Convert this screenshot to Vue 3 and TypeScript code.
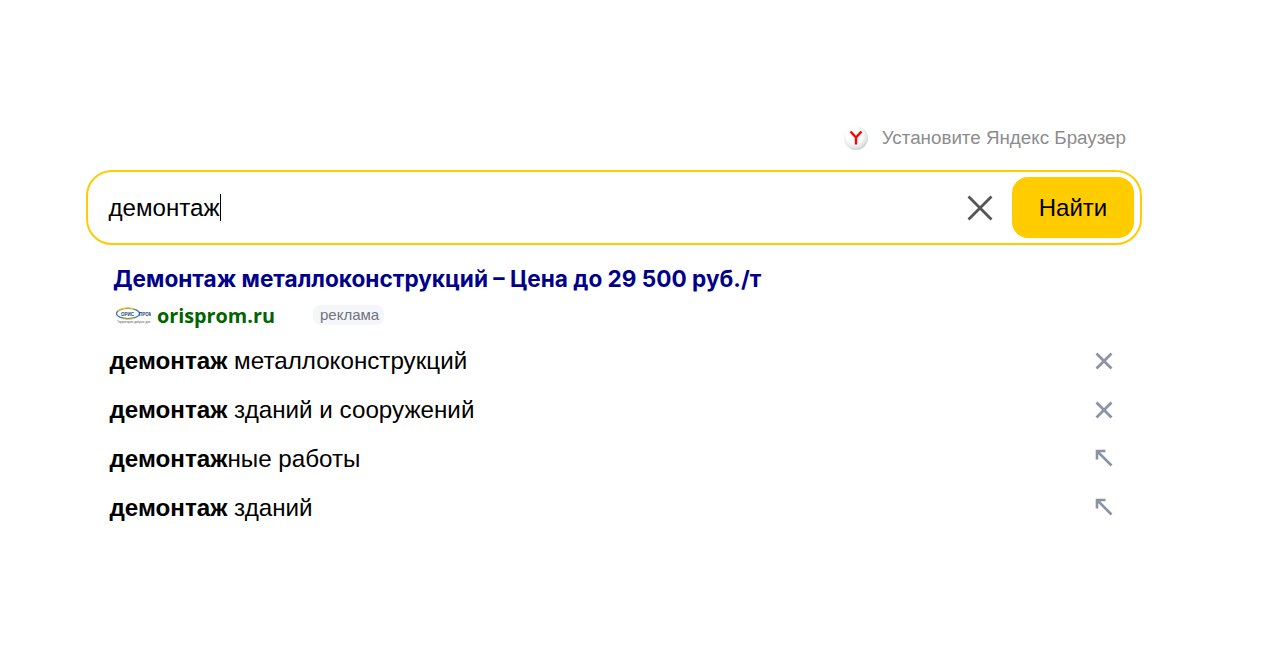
<script setup lang="ts">
interface Row { bold: string; rest: string; icon: 'x' | 'arrow' }
const rows: Row[] = [
  { bold: 'демонтаж', rest: ' металлоконструкций', icon: 'x' },
  { bold: 'демонтаж', rest: ' зданий и сооружений', icon: 'x' },
  { bold: 'демонтаж', rest: 'ные работы', icon: 'arrow' },
  { bold: 'демонтаж', rest: ' зданий', icon: 'arrow' },
]
</script>

<template>
  <div class="page">
    <div class="promo">
      <span class="ball">
        <svg width="14" height="15" viewBox="0 0 14 15"><path d="M1.500 1.500 7 7.500M12.500 1.500 7 7.500V14.500" fill="none" stroke="#f00" stroke-width="2.400" /></svg>
      </span>
      <span class="promo-text">Установите Яндекс Браузер</span>
    </div>
    <div class="search">
      <span class="query">демонтаж</span><span class="caret"></span>
      <svg class="clear" width="26" height="26" viewBox="0 0 26 26"><path d="M1.500 1.500 24.500 24.500M24.500 1.500 1.500 24.500" stroke="#555" stroke-width="2.800" fill="none" /></svg>
      <button class="find">Найти</button>
    </div>
    <div class="ad">
      <div class="ad-title">Демонтаж металлоконструкций – Цена до 29 500 руб./т</div>
      <div class="ad-meta">
        <span class="logo">
          <svg width="36" height="17" viewBox="0 0 36 17">
            <ellipse cx="13" cy="6.500" rx="11.500" ry="5.200" fill="none" stroke="#3a7fc4" stroke-width="1.300" />
            <path d="M2.500 4C7 .8 14 .4 19 1.800" fill="none" stroke="#f0c419" stroke-width="1.200" />
            <path d="M7 11.500c4 1 9 1 13-.5" fill="none" stroke="#f0c419" stroke-width="1" />
            <text x="6" y="8.500" class="logo-text">ОРИС</text>
            <text x="24" y="8.500" class="logo-text">ПРОМ</text>
            <text x="2" y="15.500" class="logo-sub">Территория добрых дел</text>
          </svg>
        </span>
        <span class="domain">orisprom.ru</span>
        <span class="tag">реклама</span>
      </div>
    </div>
    <ul class="list">
      <li v-for="row in rows" :key="row.bold + row.rest" class="row">
        <span class="row-text"><b>{{ row.bold }}</b>{{ row.rest }}</span>
        <svg v-if="row.icon === 'x'" width="18" height="18" viewBox="0 0 18 18" class="ico"><path d="M1.500 1.500 16.500 16.500M16.500 1.500 1.500 16.500" stroke="#8a93a3" stroke-width="2.800" fill="none" /></svg>
        <svg v-else width="18" height="18" viewBox="0 0 18 18" class="ico up"><path d="M16.500 16.500 2.500 2.500M2 10.500V2h8.500" stroke="#8a93a3" stroke-width="2.600" fill="none" /></svg>
      </li>
    </ul>
  </div>
</template>

<style>
html, body { background: #fff; margin: 0; }
</style>

<style scoped>
.page {
  width: 1056px;
  height: 648px;
  box-sizing: border-box;
  margin-left: 86px;
  padding-top: 125px;
  font-family: "Liberation Sans", Arial, sans-serif;
  overflow: hidden;
}
.promo {
  height: 25px;
  display: flex;
  align-items: center;
  justify-content: flex-end;
  padding-right: 16px;
  margin-bottom: 20px;
}
.ball {
  width: 24px;
  height: 24px;
  border-radius: 50%;
  background: radial-gradient(circle at 42% 38%, #fff 38%, #e2e6e6 62%, #8fa3a3 100%);
  display: flex;
  align-items: center;
  justify-content: center;
  margin-right: 14px;
}
.promo-text { font-size: 18.800px; color: #8c8c8c; }
.search {
  height: 75px;
  box-sizing: border-box;
  border: 2px solid #fc0;
  border-radius: 26px;
  display: flex;
  align-items: center;
  padding: 0 6px 0 20.500px;
}
.query { font-size: 24.100px; color: #000; }
.caret { width: 1px; height: 27px; background: #000; }
.clear { margin-left: auto; margin-right: 19px; }
.find {
  width: 122px;
  height: 61px;
  border: 0;
  border-radius: 16px;
  background: #fc0;
  color: #000;
  font: 24px "Liberation Sans", Arial, sans-serif;
}
.ad { padding: 19px 0 0 27px; }
.ad-title {
  font-family: Inter, sans-serif;
  font-size: 22.600px;
  font-weight: 700;
  line-height: 30px;
  color: #00008b;
  white-space: nowrap;
}
.ad-meta { display: flex; align-items: center; height: 34px; margin-left: 2px; padding-top: 4px; }
.logo { width: 36px; height: 17px; display: flex; margin-right: 6px; }
.logo-text { font: 700 4.500px "Liberation Sans", sans-serif; fill: #1c3f78; }
.logo-sub { font: 3px "Liberation Sans", sans-serif; fill: #4d5a70; }
.domain {
  font: 700 19.800px "Open Sans", sans-serif;
  color: #006400;
  width: 156px;
}
.tag {
  font-size: 15px;
  color: #6f7480;
  background: #f5f6fa;
  border-radius: 8px;
  padding: 1px 5px 2px 7px;
  line-height: 17px;
}
.list { list-style: none; margin: 4px 0 0; padding: 0 29px 0 23.500px; }
.row {
  height: 49px;
  display: flex;
  align-items: center;
  justify-content: space-between;
}
.row-text { font-size: 24.200px; color: #000; white-space: pre; }
.ico { flex: none; }
.up { margin-bottom: 2px; }
</style>
